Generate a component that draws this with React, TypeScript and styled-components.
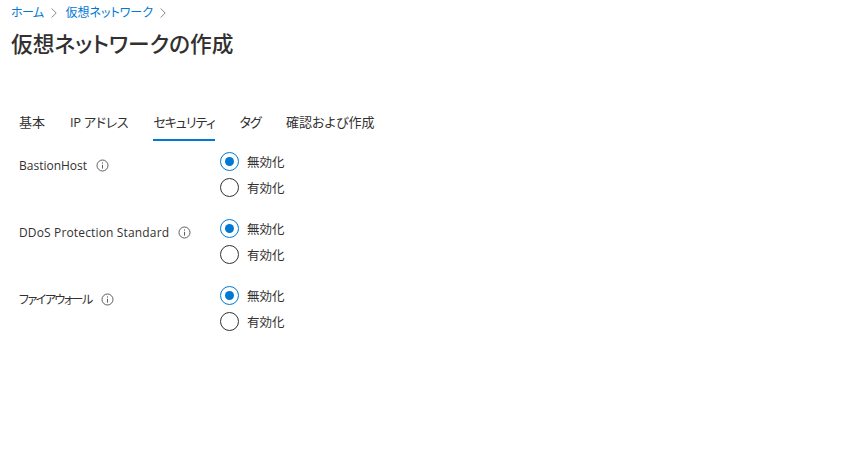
import React from 'react';
import styled, { createGlobalStyle } from 'styled-components';

const GlobalStyle = createGlobalStyle`
  html, body {
    margin: 0;
    padding: 0;
    background: #fff;
    font-family: 'Open Sans', 'Noto Sans CJK JP', sans-serif;
    font-feature-settings: 'palt';
  }
`;

const Page = styled.div`
  width: 868px;
  height: 464px;
  overflow: hidden;
  box-sizing: border-box;
  padding: 4px 0 0 11px;
`;

const Breadcrumb = styled.nav`
  display: flex;
  align-items: center;
  height: 18px;
  font-size: 12px;
  line-height: 18px;
`;

const CrumbLink = styled.a<{ $spacing?: number }>`
  color: #0078d4;
  letter-spacing: ${(p) => p.$spacing ?? 0}px;
`;

const Chevron = styled.svg`
  width: 6px;
  height: 10px;
  margin: 0 9px 0 7px;
  fill: none;
  stroke: #8a8886;
  stroke-width: 1;
`;

const Title = styled.h1`
  margin: 5px 0 0;
  font-size: 21.7px;
  line-height: 34px;
  font-weight: 500;
  color: #323130;
`;

const Tabs = styled.div`
  display: flex;
  gap: 25px;
  margin: 47px 0 0 8px;
`;

const Tab = styled.div<{ $active?: boolean; $spacing: number }>`
  height: 33px;
  box-sizing: border-box;
  padding-top: 4px;
  font-size: 13px;
  line-height: 20px;
  letter-spacing: ${(p) => p.$spacing}px;
  color: #323130;
  border-bottom: 2px solid ${(p) => (p.$active ? '#0078d4' : 'transparent')};
`;

const Form = styled.div`
  display: flex;
  flex-direction: column;
  gap: 21px;
  margin: 10px 0 0 8px;
`;

const Row = styled.div`
  display: flex;
`;

const Label = styled.div<{ $spacing: number }>`
  display: flex;
  align-items: center;
  gap: 9px;
  width: 201px;
  height: 26px;
  margin-top: 1px;
  font-size: 12px;
  letter-spacing: ${(p) => p.$spacing}px;
  color: #323130;
`;

const Info = styled.svg`
  width: 13px;
  height: 13px;
  fill: none;
  stroke: #605e5c;
`;

const RadioGroup = styled.div`
  display: flex;
  flex-direction: column;
  gap: 6px;
`;

const Option = styled.label`
  display: flex;
  align-items: center;
  gap: 8px;
  height: 20px;
  font-size: 12.5px;
  color: #323130;
`;

const Circle = styled.span<{ $checked?: boolean }>`
  display: flex;
  align-items: center;
  justify-content: center;
  width: 19px;
  height: 19px;
  box-sizing: border-box;
  border-radius: 50%;
  border: 1.5px solid ${(p) => (p.$checked ? '#0078d4' : '#323130')};
  &::after {
    content: '';
    display: ${(p) => (p.$checked ? 'block' : 'none')};
    width: 9px;
    height: 9px;
    border-radius: 50%;
    background: #0078d4;
  }
`;

const fields = [
  { name: 'BastionHost', spacing: 0 },
  { name: 'DDoS Protection Standard', spacing: 0.15 },
  { name: 'ファイアウォール', spacing: -1.5 },
];

const tabs = [
  { name: '基本', spacing: 0 },
  { name: 'IP アドレス', spacing: -0.3 },
  { name: 'セキュリティ', spacing: -1 },
  { name: 'タグ', spacing: -0.8 },
  { name: '確認および作成', spacing: 0 },
];

const ChevronIcon = () => (
  <Chevron viewBox="0 0 6 10">
    <path d="M0.7 0.5 L5.2 5 L0.7 9.5" />
  </Chevron>
);

export default function App() {
  return (
    <Page>
      <GlobalStyle />
      <Breadcrumb>
        <CrumbLink $spacing={-0.6}>ホーム</CrumbLink>
        <ChevronIcon />
        <CrumbLink>仮想ネットワーク</CrumbLink>
        <ChevronIcon />
      </Breadcrumb>
      <Title>仮想ネットワークの作成</Title>
      <Tabs>
        {tabs.map((t) => (
          <Tab key={t.name} $spacing={t.spacing} $active={t.name === 'セキュリティ'}>
            {t.name}
          </Tab>
        ))}
      </Tabs>
      <Form>
        {fields.map((f) => (
          <Row key={f.name}>
            <Label $spacing={f.spacing}>
              {f.name}
              <Info viewBox="0 0 13 13">
                <circle cx="6.5" cy="6.5" r="5.5" />
                <path d="M6.5 5.8 V9.6 M6.5 3.4 V4.6" />
              </Info>
            </Label>
            <RadioGroup>
              <Option>
                <Circle $checked />
                無効化
              </Option>
              <Option>
                <Circle />
                有効化
              </Option>
            </RadioGroup>
          </Row>
        ))}
      </Form>
    </Page>
  );
}
